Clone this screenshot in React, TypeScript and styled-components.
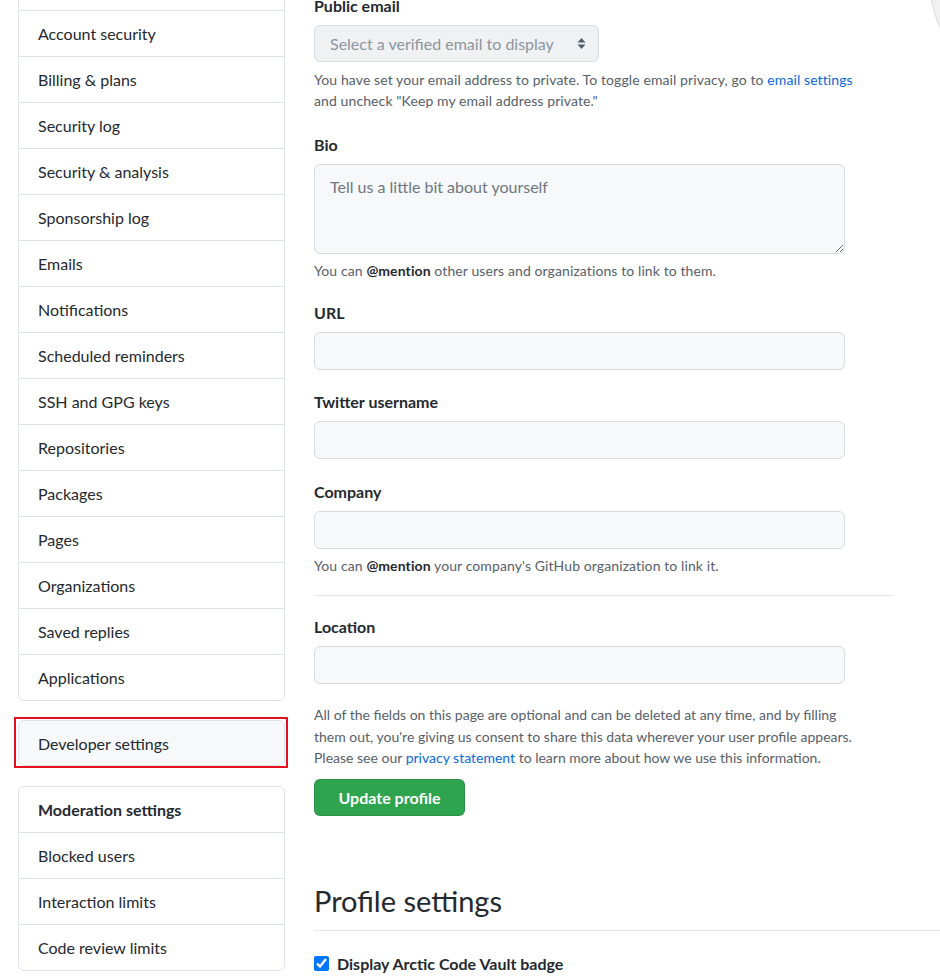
import React from 'react';
import styled, { createGlobalStyle } from 'styled-components';

const GlobalStyle = createGlobalStyle`
  html, body {
    margin: 0;
    padding: 0;
    background: #ffffff;
    overflow: hidden;
  }
  body {
    font-family: Lato, "Open Sans", "Liberation Sans", sans-serif;
    color: #24292f;
  }
`;

const Page = styled.div`
  display: flex;
  align-items: flex-start;
  gap: 29px;
  padding-left: 18px;
  width: 1100px;
`;

const Sidebar = styled.nav`
  width: 267px;
  flex-shrink: 0;
  display: flex;
  flex-direction: column;
  margin-top: -36px;
`;

const MenuBox = styled.div<{ $highlight?: boolean; $offset?: number }>`
  border: 1px solid #dfe3e8;
  border-radius: 6px;
  background: ${(p) => (p.$highlight ? '#f6f8fa' : '#ffffff')};
  margin-top: ${(p) => p.$offset ?? 0}px;
  overflow: hidden;
`;

// annotation frame drawn around the highlighted entry (square corners)
const HighlightFrame = styled.div`
  border: 2px solid #e5101e;
  padding: 1px 1px 0 2px;
  margin: 16px -3px 0 -4px;
`;

const MenuItem = styled.div<{ $heading?: boolean; $h?: number }>`
  height: ${(p) => p.$h ?? 45}px;
  display: flex;
  align-items: center;
  padding: 0 19px;
  font-size: 16px;
  font-weight: ${(p) => (p.$heading ? 700 : 400)};
  color: #24292f;
  & + & {
    border-top: 1px solid #dfe3e8;
  }
`;

const Main = styled.main`
  width: 800px;
  flex-shrink: 0;
  margin-top: -6px;
`;

const ProfileRow = styled.div`
  display: flex;
  align-items: flex-start;
`;

const FormColumn = styled.div`
  width: 579px;
  flex-shrink: 0;
`;

const AvatarColumn = styled.div`
  margin-left: 37px;
  margin-top: -109px;
`;

const Avatar = styled.div`
  width: 200px;
  height: 200px;
  border-radius: 50%;
  background: #f1f1f1;
  border: 1px solid #d9dbde;
  box-sizing: border-box;
`;

const FormGroup = styled.div<{ $gap?: number }>`
  margin-bottom: ${(p) => p.$gap ?? 20}px;
`;

const Label = styled.label`
  display: block;
  font-size: 16px;
  line-height: 24px;
  font-weight: 700;
  color: #24292f;
  margin-bottom: 7px;
`;

const SelectBox = styled.div`
  display: flex;
  align-items: center;
  justify-content: space-between;
  height: 37px;
  box-sizing: border-box;
  padding: 0 12px 0 15px;
  background: #eff1f3;
  border: 1px solid #d9dde2;
  border-radius: 6px;
  font-size: 16px;
  color: #8c959f;
  width: 285px;
`;

const fieldBase = `
  display: block;
  box-sizing: border-box;
  width: 531px;
  background: #f6f8fa;
  border: 1px solid #d6dbe0;
  border-radius: 6px;
  font-family: Lato, "Open Sans", "Liberation Sans", sans-serif;
  font-size: 16px;
  color: #24292f;
  outline: none;
  &::placeholder {
    color: #6e7781;
  }
`;

const TextInput = styled.input`
  ${fieldBase}
  height: 38px;
  padding: 0 15px;
`;

const TextArea = styled.textarea`
  ${fieldBase}
  height: 90px;
  padding: 12px 15px;
  resize: vertical;
`;

const Note = styled.p<{ $top?: number }>`
  margin: ${(p) => p.$top ?? 6}px 0 0;
  font-size: 14px;
  line-height: 21px;
  color: #57606a;
  letter-spacing: 0.1px;

  strong {
    color: #24292f;
    font-weight: 700;
  }
`;

const Link = styled.a`
  color: #0969da;
  text-decoration: none;
`;

const Divider = styled.hr`
  border: 0;
  border-top: 1px solid #e1e4e8;
  margin: 19px 0 19px;
`;

const Disclaimer = styled.p`
  margin: 0 0 10px;
  font-size: 14px;
  line-height: 21.5px;
  color: #57606a;
`;

const PrimaryButton = styled.button`
  height: 37px;
  width: 151px;
  background: #2ea44f;
  border: 1px solid rgba(27, 31, 36, 0.15);
  border-radius: 6px;
  color: #ffffff;
  font-family: Lato, "Open Sans", "Liberation Sans", sans-serif;
  font-size: 16px;
  font-weight: 700;
  cursor: pointer;
`;

const Subhead = styled.div`
  margin-top: 64px;
  padding-bottom: 8px;
  border-bottom: 1px solid #e1e4e8;
  width: 700px;
`;

const SubheadTitle = styled.h2`
  margin: 0;
  font-size: 29px;
  line-height: 42px;
  font-weight: 400;
  color: #24292f;
`;

const CheckRow = styled.label`
  display: flex;
  align-items: center;
  gap: 8px;
  margin-top: 21px;
  font-size: 16px;
  line-height: 24px;
  font-weight: 700;
  color: #24292f;

  input {
    margin: 0;
    width: 15px;
    height: 15px;
  }
`;

const SelectArrows = () => (
  <svg width="9" height="13" viewBox="0 0 9 13" aria-hidden="true">
    <path d="M4.5 1 L8.5 5.5 H0.5 Z" fill="#57606a" />
    <path d="M4.5 12 L8.5 7.5 H0.5 Z" fill="#57606a" />
  </svg>
);

const accountItems = [
  'Account',
  'Account security',
  'Billing & plans',
  'Security log',
  'Security & analysis',
  'Sponsorship log',
  'Emails',
  'Notifications',
  'Scheduled reminders',
  'SSH and GPG keys',
  'Repositories',
  'Packages',
  'Pages',
  'Organizations',
  'Saved replies',
  'Applications',
];

const moderationItems = ['Blocked users', 'Interaction limits', 'Code review limits'];

const App: React.FC = () => (
  <>
    <GlobalStyle />
    <Page>
      <Sidebar>
        <MenuBox>
          {accountItems.map((item) => (
            <MenuItem key={item}>{item}</MenuItem>
          ))}
        </MenuBox>
        <HighlightFrame>
          <MenuBox $highlight>
            <MenuItem $h={44}>Developer settings</MenuItem>
          </MenuBox>
        </HighlightFrame>
        <MenuBox $offset={18}>
          <MenuItem $heading>Moderation settings</MenuItem>
          {moderationItems.map((item) => (
            <MenuItem key={item}>{item}</MenuItem>
          ))}
        </MenuBox>
      </Sidebar>

      <Main>
        <ProfileRow>
          <FormColumn>
            <FormGroup $gap={22}>
              <Label>Public email</Label>
              <SelectBox>
                <span>Select a verified email to display</span>
                <SelectArrows />
              </SelectBox>
              <Note $top={7}>
                You have set your email address to private. To toggle email privacy, go to{' '}
                <Link href="#">email settings</Link>
                <br />
                and uncheck "Keep my email address private."
              </Note>
            </FormGroup>

            <FormGroup>
              <Label>Bio</Label>
              <TextArea placeholder="Tell us a little bit about yourself" />
              <Note>
                You can <strong>@mention</strong> other users and organizations to link to them.
              </Note>
            </FormGroup>

            <FormGroup>
              <Label>URL</Label>
              <TextInput />
            </FormGroup>

            <FormGroup $gap={21}>
              <Label>Twitter username</Label>
              <TextInput />
            </FormGroup>

            <FormGroup $gap={0}>
              <Label>Company</Label>
              <TextInput />
              <Note>
                You can <strong>@mention</strong> your company's GitHub organization to link it.
              </Note>
            </FormGroup>

            <Divider />

            <FormGroup>
              <Label>Location</Label>
              <TextInput />
            </FormGroup>

            <Disclaimer>
              All of the fields on this page are optional and can be deleted at any time, and by filling
              <br />
              them out, you're giving us consent to share this data wherever your user profile appears.
              <br />
              Please see our <Link href="#">privacy statement</Link> to learn more about how we use this
              information.
            </Disclaimer>

            <PrimaryButton type="button">Update profile</PrimaryButton>
          </FormColumn>

          <AvatarColumn>
            <Avatar />
          </AvatarColumn>
        </ProfileRow>

        <Subhead>
          <SubheadTitle>Profile settings</SubheadTitle>
        </Subhead>

        <CheckRow>
          <input type="checkbox" defaultChecked />
          Display Arctic Code Vault badge
        </CheckRow>
      </Main>
    </Page>
  </>
);

export default App;
